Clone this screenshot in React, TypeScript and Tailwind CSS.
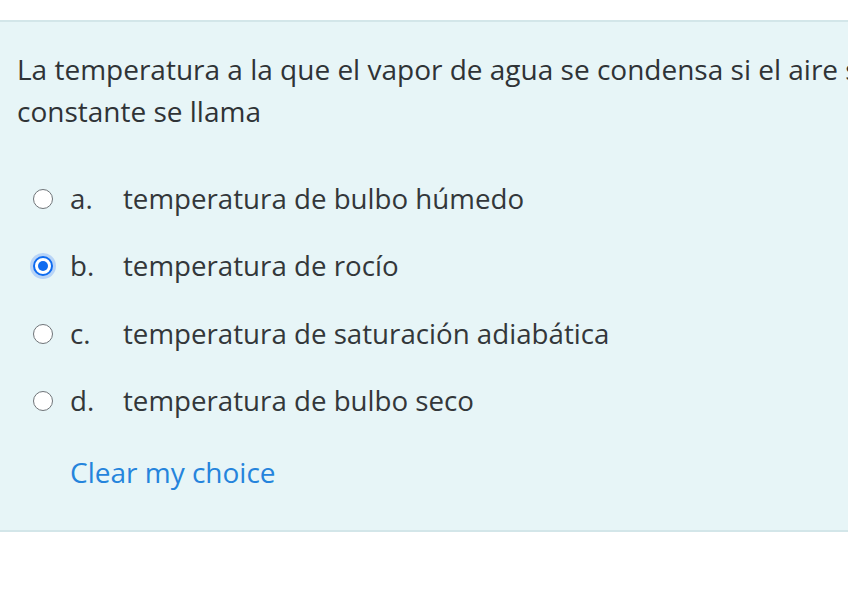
import React from "react";

const options = [
  { l: "a.", t: "temperatura de bulbo húmedo", checked: false },
  { l: "b.", t: "temperatura de rocío", checked: true },
  { l: "c.", t: "temperatura de saturación adiabática", checked: false },
  { l: "d.", t: "temperatura de bulbo seco", checked: false },
];

export default function App() {
  return (
    <div className="w-[848px] h-[599px] overflow-hidden bg-white" style={{ fontFamily: '"Open Sans", "Noto Sans", sans-serif' }}>
      <div className="mt-[20px] h-[512px] border-y-2 border-[#d3e6e9] bg-[#e7f5f7] overflow-hidden">
        <div className="pl-[17px] pt-[26px] w-[1200px] text-[28px] leading-[42px] text-[#2f3336] tracking-[0px]">
          La temperatura a la que el vapor de agua se condensa si el aire se mantiene a presión
          <br />
          constante se llama
        </div>
        <div className="mt-[44px] flex flex-col gap-[22.5px] pl-[33px]">
          {options.map((o) => (
            <div key={o.l} className="flex items-center h-[45px] text-[27.7px] text-[#33373a]">
              <span className="w-[20px] h-[20px] flex items-center justify-center">
                {o.checked ? (
                  <span className="w-[20px] h-[20px] rounded-full bg-white border-[2.5px] border-[#0f6cf0] ring-[3px] ring-[#b8d4f7] flex items-center justify-center">
                    <span className="w-[10px] h-[10px] rounded-full bg-[#0f6cf0]" />
                  </span>
                ) : (
                  <span className="w-[20px] h-[20px] rounded-full bg-white border-[1.5px] border-[#6f7478]" />
                )}
              </span>
              <span className="ml-[17px] w-[53px]">{o.l}</span>
              <span>{o.t}</span>
            </div>
          ))}
        </div>
        <div className="mt-[27px] pl-[70px] text-[28px] text-[#2584dc]">Clear my choice</div>
      </div>
    </div>
  );
}
